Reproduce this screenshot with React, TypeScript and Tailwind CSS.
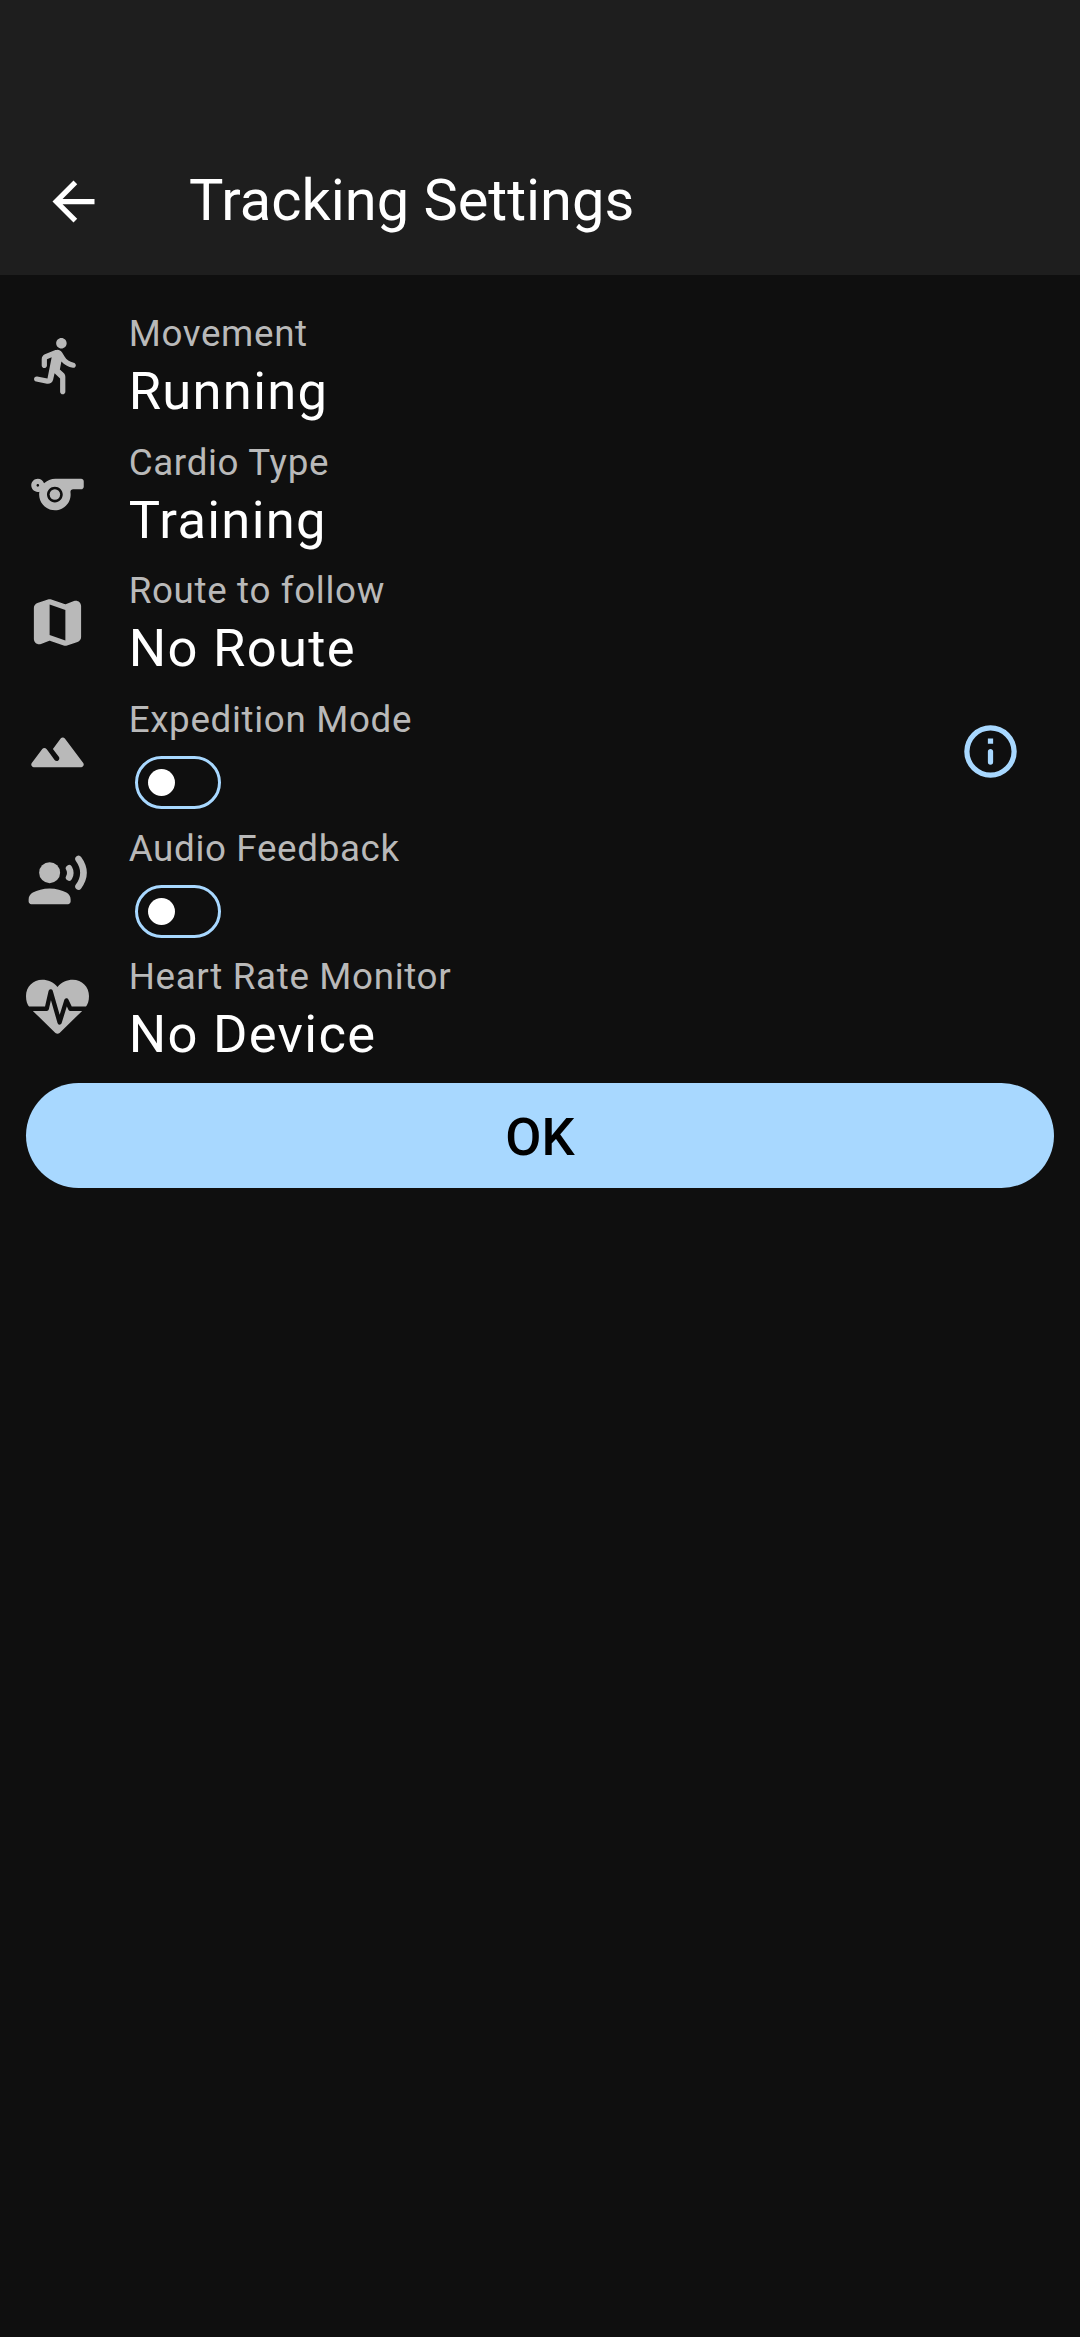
import type { ReactNode } from "react";

function Icon({ children, className = "text-[#b9b9b9]" }: { children: ReactNode; className?: string }) {
  return (
    <svg viewBox="0 0 24 24" fill="currentColor" className={`mt-[1px] size-[63px] shrink-0 ${className}`}>
      {children}
    </svg>
  );
}

const icons = {
  run: (
    <path d="M13.49 5.48c1.1 0 2-.9 2-2s-.9-2-2-2-2 .9-2 2 .9 2 2 2zm-3.6 13.9 1-4.4 2.1 2v5c0 .55.45 1 1 1s1-.45 1-1v-5.64c0-.55-.22-1.07-.62-1.45l-1.48-1.41.6-3c1.07 1.24 2.62 2.13 4.36 2.41.6.09 1.14-.39 1.14-1 0-.49-.36-.9-.84-.98-1.53-.25-2.8-1.15-3.46-2.33l-1-1.6c-.4-.6-1-1-1.7-1-.3 0-.5.1-.8.1l-3.99 1.68c-.74.32-1.22 1.04-1.22 1.85v2.37c0 .55.45 1 1 1s1-.45 1-1v-2.4l1.8-.7-1.6 8.1-3.92-.8c-.54-.11-1.07.24-1.18.78-.11.54.24 1.07.78 1.18l4.11.82c1.06.21 2.1-.46 2.34-1.52z" />
  ),
  whistle: (
    <>
      <path
        fillRule="evenodd"
        d="M11.23 6c-1.66 0-3.22.66-4.36 1.73C6.54 6.73 5.61 6 4.5 6 3.12 6 2 7.12 2 8.5S3.12 11 4.5 11c.21 0 .41-.03.61-.08-.05.25-.09.51-.1.78-.18 3.68 2.95 6.68 6.68 6.27 2.55-.28 4.68-2.26 5.19-4.77.15-.71.15-1.4.06-2.06-.09-.6.38-1.13.99-1.13H21c.55 0 1-.45 1-1V7c0-.55-.45-1-1-1zM4.5 9c-.28 0-.5-.22-.5-.5s.22-.5.5-.5.5.22.5.5-.22.5-.5.5zm6.5 6c-1.66 0-3-1.34-3-3s1.34-3 3-3 3 1.34 3 3-1.34 3-3 3z"
      />
      <circle cx="11" cy="12" r="2" />
    </>
  ),
  map: (
    <path d="M14.65 4.98l-5-1.75c-.42-.15-.88-.15-1.3-.01L4.36 4.56C3.55 4.84 3 5.6 3 6.46v11.85c0 1.41 1.41 2.37 2.72 1.86l2.93-1.14c.22-.09.47-.09.69-.01l5 1.75c.42.15.88.15 1.3.01l3.99-1.34c.81-.27 1.36-1.04 1.36-1.9V5.69c0-1.41-1.41-2.37-2.72-1.86l-2.93 1.14c-.22.08-.46.09-.69.01zM15 18.89l-6-2.11V5.11l6 2.11v11.67z" />
  ),
  mountains: (
    <path d="M13.2 7.07 10.25 11l2.25 3c.33.44.24 1.07-.2 1.4-.44.33-1.07.25-1.4-.2-1.05-1.4-2.31-3.07-3.1-4.14-.4-.53-1.2-.53-1.6 0l-4 5.33c-.49.67-.02 1.61.8 1.61h18c.82 0 1.29-.94.8-1.6l-7-9.33c-.4-.54-1.2-.54-1.6 0z" />
  ),
  voice: (
    <>
      <circle cx="9" cy="9" r="4" />
      <path d="M15.39 16.56C13.71 15.7 11.53 15 9 15s-4.71.7-6.39 1.56C1.61 17.07 1 18.1 1 19.22V20c0 .55.45 1 1 1h14c.55 0 1-.45 1-1v-.78c0-1.12-.61-2.15-1.61-2.66z" />
      <path
        fill="none"
        stroke="currentColor"
        strokeWidth="2.5"
        strokeLinecap="round"
        d="M16.4 7.35q.95 1.75 0 3.5M20 3.8q3.8 5.25 0 10.5"
      />
    </>
  ),
  heart: (
    <>
      <path d="M12 3.8C10.5 1.9 8.3 1 6.2 1 2.7 1 0 3.7 0 7.2c0 2 .5 3.1 1.2 4.2l1.5 1.6 8.5 8.3q.8.6 1.6 0l8.5-8.3 1.5-1.6c.7-1.1 1.2-2.2 1.2-4.2C24 3.7 21.3 1 17.8 1c-2.1 0-4.3.9-5.8 2.8z" />
      <path
        className="stroke-[#0f0f0f]"
        fill="none"
        strokeWidth="1.65"
        strokeLinejoin="round"
        d="M0 12.1h7.9l1.5-6.6 3.4 11.8 2.6-8.4 1.5 3.2H24"
      />
    </>
  ),
  info: (
    <>
      <path
        fillRule="evenodd"
        d="M12 2a10 10 0 1 0 0 20 10 10 0 0 0 0-20zm0 18a8 8 0 1 1 0-16 8 8 0 0 1 0 16z"
      />
      <path d="M11 7h2v2h-2zM12 11c.55 0 1 .45 1 1v4a1 1 0 0 1-2 0v-4c0-.55.45-1 1-1z" />
    </>
  ),
};

function Toggle() {
  return (
    <button
      role="switch"
      aria-checked={false}
      className="ml-[6px] mt-[13px] flex h-[53px] w-[86px] items-center rounded-full border-[3px] border-[#a8d8ff] pl-[10px]"
    >
      <span className="size-[27px] rounded-full bg-white" />
    </button>
  );
}

function Row({ icon, label, children, action }: { icon: ReactNode; label: string; children: ReactNode; action?: ReactNode }) {
  return (
    <div className="flex h-[128.625px] items-center pl-[26.25px] pr-[58px]">
      <Icon>{icon}</Icon>
      <div className="ml-[39.4px] h-full flex-1 pt-[10.4px]">
        <div className="whitespace-nowrap text-[36.75px] leading-[46px] tracking-[0.66px] text-[#b9b9b9]">{label}</div>
        {children}
      </div>
      {action}
    </div>
  );
}

function Value({ children }: { children: ReactNode }) {
  return <div className="whitespace-nowrap text-[52.5px] leading-[68px] tracking-[1.31px] text-white">{children}</div>;
}

export default function App() {
  return (
    <div className="min-h-[2337px] w-full bg-[#0f0f0f] font-[Roboto,sans-serif]">
      <header className="flex h-[274.6px] items-end bg-[#1e1e1e]">
        <div className="flex h-[147px] w-full items-center pl-[42px]">
          <Icon className="text-white">
            <path d="M20 11H7.83l5.59-5.59L12 4l-8 8 8 8 1.41-1.41L7.83 13H20v-2z" />
          </Icon>
          <h1 className="ml-[84px] whitespace-nowrap pb-[2px] text-[57.75px] leading-[68px] text-white">Tracking Settings</h1>
        </div>
      </header>
      <main className="pt-[26.25px]">
        <Row icon={icons.run} label="Movement">
          <Value>Running</Value>
        </Row>
        <Row icon={icons.whistle} label="Cardio Type">
          <Value>Training</Value>
        </Row>
        <Row icon={icons.map} label="Route to follow">
          <Value>No Route</Value>
        </Row>
        <Row
          icon={icons.mountains}
          label="Expedition Mode"
          action={<Icon className="text-[#a8d8ff]">{icons.info}</Icon>}
        >
          <Toggle />
        </Row>
        <Row icon={icons.voice} label="Audio Feedback">
          <Toggle />
        </Row>
        <Row icon={icons.heart} label="Heart Rate Monitor">
          <Value>No Device</Value>
        </Row>
        <div className="px-[26.25px] pt-[10.5px]">
          <button className="flex h-[105px] w-full items-center justify-center rounded-full bg-[#a8d8ff] pt-[4px] text-[52.5px] font-medium text-black">
            OK
          </button>
        </div>
      </main>
    </div>
  );
}
